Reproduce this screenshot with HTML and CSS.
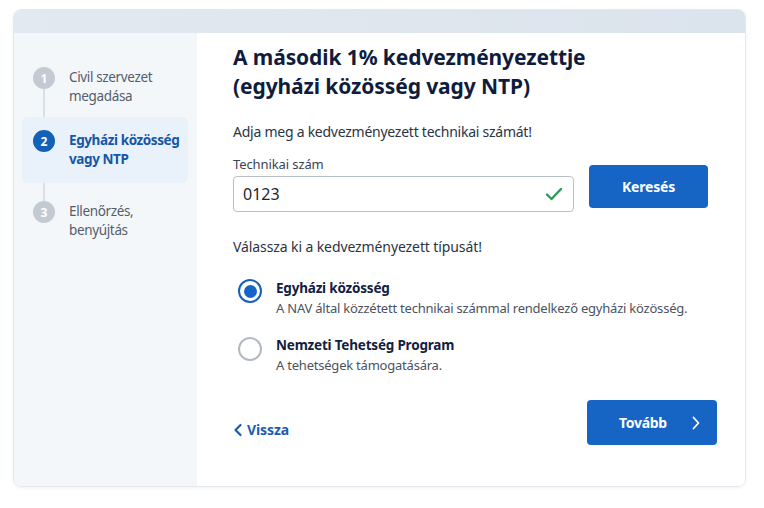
FILE: index.html
```html
<!DOCTYPE html>
<html lang="hu">
<head>
<meta charset="utf-8">
<title>1% kedvezményezett</title>
<link rel="stylesheet" href="styles.css">
</head>
<body>
<div class="card">
  <div class="card-top"></div>
  <div class="card-body">
    <aside class="sidebar">
      <ol class="steps">
        <li class="step done"><span class="num">1</span><span class="step-text">Civil szervezet<br>megadása</span></li>
        <li class="step active"><span class="num">2</span><span class="step-text">Egyházi közösség<br>vagy NTP</span></li>
        <li class="step todo"><span class="num">3</span><span class="step-text">Ellenőrzés,<br>benyújtás</span></li>
      </ol>
    </aside>
    <main class="main">
      <h1 class="title">A második 1% kedvezményezettje<br>(egyházi közösség vagy NTP)</h1>
      <p class="lead">Adja meg a kedvezményezett technikai számát!</p>
      <div class="search-row">
        <div class="field">
          <label class="label" for="tsz">Technikai szám</label>
          <div class="input">
            <span class="input-value" id="tsz">0123</span>
            <svg class="check" width="18" height="14" viewBox="0 0 18 14"><path d="M2 7.5 L6.5 12 L16 2" fill="none" stroke="#2e9a57" stroke-width="2.4" stroke-linecap="round" stroke-linejoin="round"/></svg>
          </div>
        </div>
        <button class="btn btn-search">Keresés</button>
      </div>
      <p class="lead lead-2">Válassza ki a kedvezményezett típusát!</p>
      <div class="options">
        <div class="option">
          <span class="radio checked"></span>
          <div class="option-text">
            <div class="option-title">Egyházi közösség</div>
            <div class="option-desc">A NAV által közzétett technikai számmal rendelkező egyházi közösség.</div>
          </div>
        </div>
        <div class="option">
          <span class="radio"></span>
          <div class="option-text">
            <div class="option-title">Nemzeti Tehetség Program</div>
            <div class="option-desc">A tehetségek támogatására.</div>
          </div>
        </div>
      </div>
      <div class="actions">
        <a class="back" href="#"><svg width="10" height="14" viewBox="0 0 10 14"><path d="M7.5 2 L2.5 7 L7.5 12" fill="none" stroke="#1a5cb0" stroke-width="2.2" stroke-linecap="round" stroke-linejoin="round"/></svg>Vissza</a>
        <button class="btn btn-next">Tovább<svg width="10" height="16" viewBox="0 0 10 16"><path d="M2.5 2.5 L7.5 8 L2.5 13.5" fill="none" stroke="#ffffff" stroke-width="1.8" stroke-linecap="round" stroke-linejoin="round"/></svg></button>
      </div>
    </main>
  </div>
</div>
</body>
</html>
```
FILE: styles.css
```css
* { box-sizing: border-box; }
html, body { margin: 0; padding: 0; background: #ffffff; }
body {
  font-family: "Noto Sans", "Open Sans", sans-serif;
  color: #1f2a3c;
  width: 764px;
  height: 508px;
  overflow: hidden;
}
.card {
  margin: 9px 18px 0 13px;
  height: 478px;
  border: 1px solid #e4e8ee;
  border-radius: 8px;
  overflow: hidden;
  display: flex;
  flex-direction: column;
  box-shadow: 0 1px 3px rgba(30, 50, 80, 0.06);
}
.card-top {
  height: 23px;
  flex: none;
  background: linear-gradient(90deg, #e3e9f0, #dbe3ec);
}
.card-body {
  flex: 1;
  display: flex;
}
.sidebar {
  width: 183px;
  flex: none;
  background: #f4f7fa;
  padding: 22px 9px 0 8px;
}
.steps {
  list-style: none;
  margin: 0;
  padding: 0;
  position: relative;
}
.steps::before {
  content: "";
  position: absolute;
  left: 21px;
  top: 30px;
  bottom: 40px;
  width: 2px;
  background: #d9dfe6;
}
.step {
  display: flex;
  align-items: flex-start;
  gap: 14px;
  padding: 13px 4px 11px 11px;
  position: relative;
  border-radius: 6px;
}
.step.active {
  background: #e9f1fa;
  padding-top: 14px;
  padding-bottom: 14px;
}
.step.active + .step { margin-top: 6px; }
.num {
  width: 22px;
  height: 22px;
  border-radius: 50%;
  flex: none;
  background: #c3cad2;
  color: #ffffff;
  font-size: 12px;
  font-weight: 700;
  display: flex;
  align-items: center;
  justify-content: center;
  margin-top: -1px;
}
.active .num { background: #1361b6; }
.step-text {
  font-size: 13.5px;
  letter-spacing: -0.35px;
  line-height: 19px;
  color: #535d6b;
  white-space: nowrap;
}
.active .step-text { color: #1657a6; font-weight: 700; letter-spacing: -0.4px; }

.main {
  flex: 1;
  background: #ffffff;
  padding: 10px 28px 0 36px;
  display: flex;
  flex-direction: column;
}
.title {
  margin: 0;
  font-size: 21px;
  line-height: 29px;
  font-weight: 700;
  color: #0f1c3d;
  letter-spacing: -0.1px;
}
.lead {
  margin: 21px 0 0;
  font-size: 14px;
  letter-spacing: -0.25px;
  line-height: 20px;
  color: #2b3444;
}
.lead-2 { margin-top: 25px; letter-spacing: -0.1px; }
.search-row {
  margin-top: 13px;
  display: flex;
  align-items: flex-start;
  gap: 15px;
}
.field { display: flex; flex-direction: column; }
.label {
  font-size: 13px;
  letter-spacing: -0.1px;
  line-height: 18px;
  color: #3a4352;
  margin-bottom: 3px;
}
.input {
  width: 341px;
  height: 36px;
  border: 1px solid #b8c0c9;
  border-radius: 4px;
  display: flex;
  align-items: center;
  justify-content: space-between;
  padding: 0 10px 0 9px;
  background: #ffffff;
}
.input-value { font-size: 16px; color: #1c2433; }
.btn {
  border: none;
  border-radius: 4px;
  background: #1665c4;
  color: #ffffff;
  font-family: inherit;
  font-weight: 700;
  font-size: 14px;
  letter-spacing: -0.2px;
  cursor: pointer;
}
.btn-search {
  width: 119px;
  height: 43px;
  margin-top: 10px;
}
.options {
  margin-top: 21px;
  display: flex;
  flex-direction: column;
  gap: 17px;
}
.option {
  display: flex;
  align-items: flex-start;
  gap: 14px;
  padding-left: 5px;
}
.radio {
  width: 24px;
  height: 24px;
  border-radius: 50%;
  border: 2px solid #b3b9c1;
  flex: none;
  margin-top: 2px;
  display: flex;
  align-items: center;
  justify-content: center;
  background: #ffffff;
}
.radio.checked {
  border: 2.5px solid #1460ba;
  margin-top: 1px;
}
.radio.checked::after {
  content: "";
  width: 13px;
  height: 13px;
  border-radius: 50%;
  background: #1565c8;
}
.option-title {
  font-size: 13.5px;
  letter-spacing: -0.2px;
  line-height: 20px;
  font-weight: 700;
  color: #12203f;
}
.option-desc {
  font-size: 13px;
  letter-spacing: -0.22px;
  line-height: 20px;
  color: #4a5362;
  white-space: nowrap;
}
.actions {
  margin-top: 25px;
  display: flex;
  justify-content: space-between;
  align-items: flex-end;
}
.back {
  display: flex;
  align-items: center;
  gap: 4px;
  color: #1a5cb0;
  font-size: 14px;
  letter-spacing: -0.1px;
  font-weight: 700;
  text-decoration: none;
  line-height: 20px;
  margin-bottom: 5px;
}
.btn-next {
  width: 130px;
  height: 45px;
  display: flex;
  align-items: center;
  justify-content: space-between;
  padding: 0 16px 0 32px;
  letter-spacing: -0.3px;
}
```
